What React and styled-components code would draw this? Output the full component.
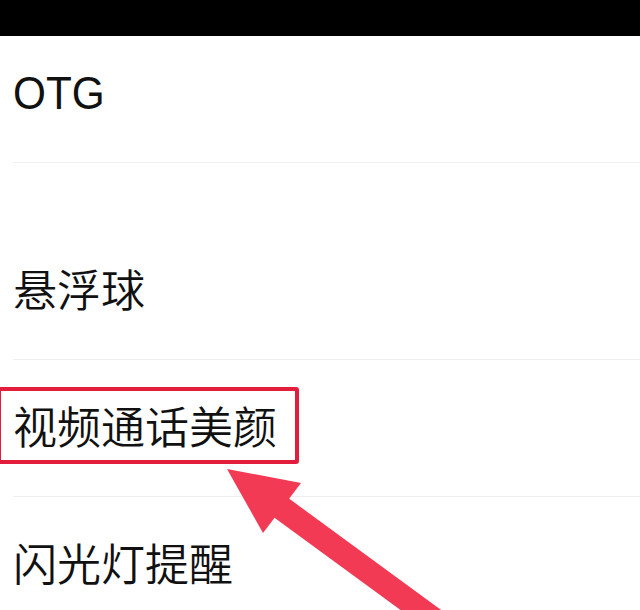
import styled, { createGlobalStyle } from "styled-components";

const GlobalStyle = createGlobalStyle`
  html, body {
    margin: 0;
    padding: 0;
    background: #ffffff;
  }
  body {
    font-family: Roboto, "Noto Sans CJK SC", sans-serif;
    overflow: hidden;
  }
`;

const items = [
  { label: "OTG", first: true },
  { label: "悬浮球", gapBefore: true },
  { label: "视频通话美颜", marked: true },
  { label: "闪光灯提醒" },
];

const App = () => {
  return (
    <Screen>
      <GlobalStyle />
      <StatusBar />
      <List>
        {items.map((item) => (
          <Row key={item.label} first={item.first} gapBefore={item.gapBefore}>
            <Label latin={item.first}>{item.label}</Label>
            {item.marked && <Highlight />}
          </Row>
        ))}
      </List>
      <Arrow viewBox="0 0 640 610">
        <line
          x1="272"
          y1="501"
          x2="470"
          y2="646"
          stroke="#f23a55"
          strokeWidth="24"
        />
        <polygon points="227,469 301,483 263,533" fill="#f23a55" />
      </Arrow>
    </Screen>
  );
};

const Screen = styled.div`
  position: relative;
  width: 640px;
  height: 610px;
  overflow: hidden;
  background: #ffffff;
`;

const StatusBar = styled.div`
  height: 36px;
  background: #000000;
`;

const List = styled.div`
  display: flex;
  flex-direction: column;
`;

const Row = styled.div`
  position: relative;
  display: flex;
  align-items: center;
  height: ${(p) => (p.first ? "127px" : "137px")};
  padding: ${(p) => (p.first ? "0 0 14px 13px" : "0 0 0 13px")};
  margin-top: ${(p) => (p.gapBefore ? "60px" : "0")};
  box-sizing: border-box;
  &::after {
    content: "";
    position: absolute;
    left: 13px;
    right: 0;
    bottom: 0;
    height: 1px;
    background: #efefef;
  }
`;

const Label = styled.span`
  font-family: ${(p) =>
    p.latin ? '"Liberation Sans", sans-serif' : 'Roboto, "Noto Sans CJK SC", sans-serif'};
  font-size: ${(p) => (p.latin ? "47px" : "44px")};
  font-weight: ${(p) => (p.latin ? 400 : 350)};
  line-height: 1;
  color: #111111;
  display: inline-block;
  transform: ${(p) => (p.latin ? "scaleX(0.9)" : "none")};
  transform-origin: left center;
`;

const Highlight = styled.div`
  position: absolute;
  left: -3px;
  top: 27px;
  width: 302px;
  height: 77px;
  border: 4px solid #e21e3c;
  border-radius: 3px;
  box-sizing: border-box;
`;

const Arrow = styled.svg`
  position: absolute;
  left: 0;
  top: 0;
  width: 640px;
  height: 610px;
  pointer-events: none;
`;

export default App;
